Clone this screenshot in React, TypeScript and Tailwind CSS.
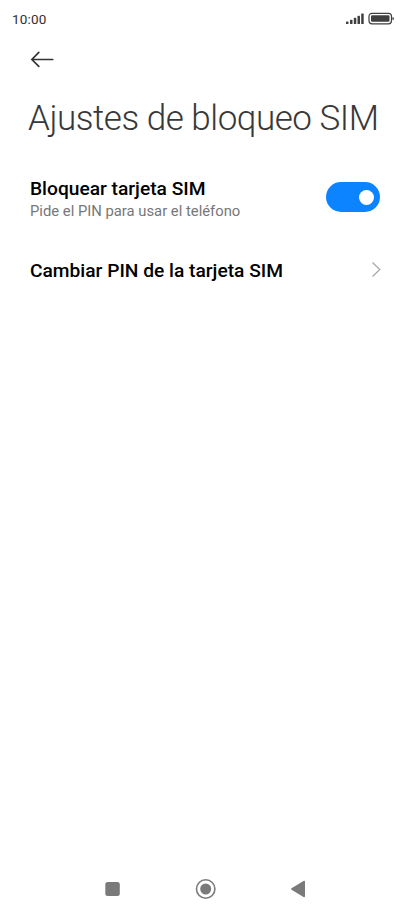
export default function App() {
  return (
    <div className="flex h-[914px] w-[411px] flex-col overflow-hidden bg-white font-[Roboto,sans-serif] text-black">
      <header className="flex h-[38px] items-center justify-between pl-3 pr-4 text-[13.500px] tracking-[0.200px] text-[#303030]">
        <span className="pt-px">10:00</span>
        <svg width="50" height="14" viewBox="0 0 50 14" fill="#404040">
          <rect x="1" y="9.500" width="2.500" height="2.500" rx=".6" />
          <rect x="5" y="7.800" width="2.500" height="4.200" rx=".6" />
          <rect x="8.800" y="5.800" width="2.500" height="6.200" rx=".6" />
          <rect x="12.500" y="3.800" width="2.500" height="8.200" rx=".6" />
          <rect x="16.200" y="1.500" width="2.500" height="10.500" rx=".6" />
          <rect x="24" y="1.300" width="22.500" height="10.500" rx="3" fill="none" stroke="#404040" strokeWidth="1.200" />
          <rect x="26" y="3.300" width="18.500" height="6.500" rx="1.200" />
          <path d="M47.500 5q1.500 0 1.500 1.500T47.500 8z" />
        </svg>
      </header>
      <main className="flex flex-1 flex-col">
        <svg className="ml-[30px] mt-[12px]" width="24" height="18" viewBox="0 0 24 18" fill="none" stroke="#333" strokeWidth="1.700" strokeLinecap="round">
          <path d="M22.700 9.500H2M8.800 2.300 1.900 9.500l6.900 6.800" />
        </svg>
        <h1 className="mt-[27px] pl-7 text-[35px] font-light leading-[48px] tracking-[-0.470px] whitespace-nowrap text-[#383838]">Ajustes de bloqueo SIM</h1>
        <section className="mt-[33px] flex items-start justify-between pl-[30px] pr-[31px]">
          <div className="pt-px">
            <h2 className="text-[19.200px] font-medium leading-6">Bloquear tarjeta SIM</h2>
            <p className="-mt-px text-[14.800px] leading-[22px] text-[#777]">Pide el PIN para usar el teléfono</p>
          </div>
          <span className="mt-[6px] flex h-[30px] w-[54px] items-center justify-end rounded-full bg-[#0d84ff] pr-[6px]"><span className="size-[15px] rounded-full bg-white" /></span>
        </section>
        <section className="mt-[37px] flex items-center justify-between pl-[30px] pr-[29px]">
          <h2 className="text-[19.200px] font-medium leading-6">Cambiar PIN de la tarjeta SIM</h2>
          <svg className="mb-1" width="12" height="18" viewBox="0 0 12 18" fill="none" stroke="#aaa" strokeWidth="1.300"><path d="m2.500 2.500 7.300 7-7.300 7" /></svg>
        </section>
      </main>
      <nav className="flex h-[50px] items-center justify-center">
        <svg width="202" height="22" viewBox="0 0 202 22" fill="#7a7a7a">
          <rect x=".3" y="4" width="14.500" height="14" rx="2.500" />
          <circle cx="100.700" cy="11" r="9.200" fill="none" stroke="#7a7a7a" strokeWidth="1.600" /><circle cx="100.700" cy="11" r="5.500" />
          <path d="M186.500 10.300 198.500 3q1.500-.7 1.500 1v14q0 1.700-1.500 1L186.500 11.700q-1-.7 0-1.400z" />
        </svg>
      </nav>
    </div>
  );
}
